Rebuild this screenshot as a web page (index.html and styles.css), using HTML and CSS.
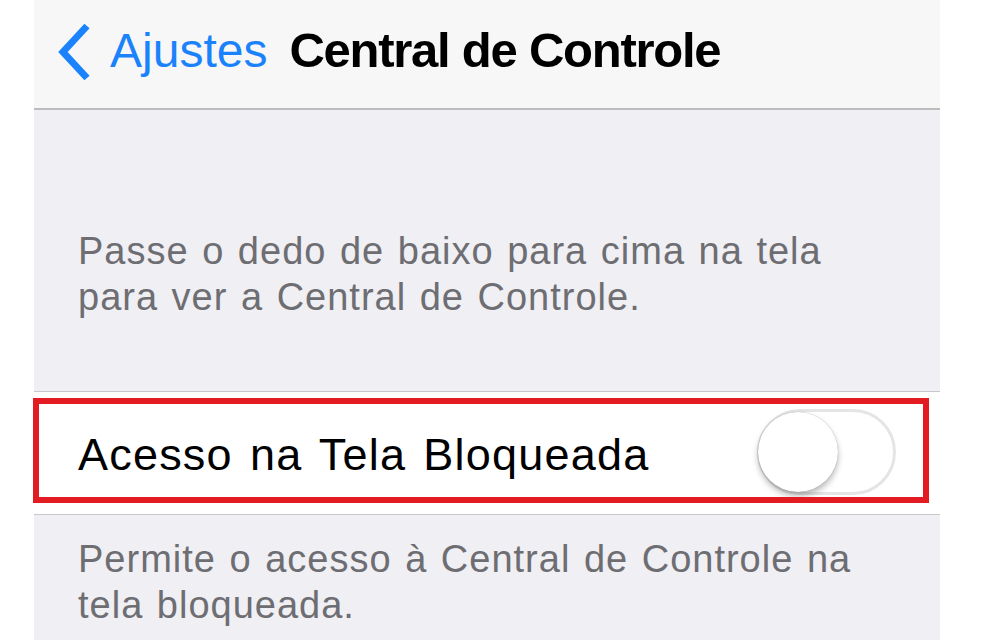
FILE: index.html
```html
<!DOCTYPE html>
<html lang="pt">
<head>
<meta charset="utf-8">
<title>Central de Controle</title>
<link rel="stylesheet" href="styles.css">
</head>
<body>
<div class="screen">
  <header class="nav">
    <a class="back" href="#">
      <svg class="chevron" width="36" height="58" viewBox="0 0 36 58"><path d="M31 3 L7 29 L31 55" fill="none" stroke="#1a82fb" stroke-width="7"/></svg>
      <span class="back-label">Ajustes</span>
    </a>
    <h1 class="title">Central de Controle</h1>
  </header>
  <main class="content">
    <p class="section-header">Passe o dedo de baixo para cima na tela<br>para ver a Central de Controle.</p>
    <div class="group">
      <div class="row">
        <span class="row-label">Acesso na Tela Bloqueada</span>
        <span class="switch"><span class="knob"></span></span>
      </div>
      <div class="highlight"></div>
    </div>
    <p class="section-footer">Permite o acesso à Central de Controle na<br>tela bloqueada.</p>
  </main>
</div>
</body>
</html>
```

FILE: styles.css
```css
html, body {
  margin: 0;
  padding: 0;
  background: #ffffff;
  height: 100%;
  overflow: hidden;
}

body {
  font-family: "Liberation Sans", Arial, sans-serif;
}

.screen {
  margin-left: 34px;
  width: 906px;
  height: 640px;
  background: #efeff4;
  display: flex;
  flex-direction: column;
}

/* navigation bar */
.nav {
  height: 108px;
  background: #f7f7f7;
  border-bottom: 2px solid #bcbcbc;
  display: flex;
  align-items: center;
  flex-shrink: 0;
}

.back {
  display: flex;
  align-items: center;
  text-decoration: none;
  margin-left: 22px;
  gap: 18px;
}

.chevron {
  display: block;
  margin-top: -4px;
}

.back-label {
  color: #1a82fb;
  font-size: 48px;
  line-height: 1;
  margin-top: -6px;
}

.title {
  margin: -8px 0 0 22px;
  font-size: 49px;
  font-weight: bold;
  letter-spacing: -1.25px;
  color: #000;
  line-height: 1;
}

/* grouped list */
.content {
  flex: 1;
}

.section-header,
.section-footer {
  margin: 0;
  color: #6d6d72;
  font-size: 38px;
  line-height: 46px;
  letter-spacing: 1px;
  word-spacing: 2px;
  padding-left: 44px;
}

.section-header {
  padding-top: 118px;
  padding-bottom: 71px;
}

.section-footer {
  padding-top: 21px;
}

.group {
  position: relative;
  background: #ffffff;
  border-top: 1px solid #c8c7cc;
  border-bottom: 1px solid #c8c7cc;
}

.row {
  height: 122px;
  display: flex;
  align-items: center;
  justify-content: space-between;
  padding-left: 44px;
  padding-right: 44px;
}

.row-label {
  font-size: 45px;
  line-height: 45px;
  letter-spacing: 1.2px;
  word-spacing: 3.5px;
  color: #000;
  margin-top: 2px;
}

/* switch, off state */
.switch {
  position: relative;
  width: 139px;
  height: 86px;
  box-sizing: border-box;
  border: 3px solid #e5e5e5;
  border-radius: 43px;
  background: #ffffff;
  margin-top: -2px;
}

.knob {
  position: absolute;
  left: -2px;
  top: 0;
  width: 80px;
  height: 80px;
  border-radius: 50%;
  background: #ffffff;
  box-shadow: 0 4px 6px rgba(0, 0, 0, 0.28), 0 0 1px rgba(0, 0, 0, 0.35);
}

/* red annotation frame over the row */
.highlight {
  position: absolute;
  left: -1px;
  top: 6px;
  width: 896px;
  height: 105px;
  box-sizing: border-box;
  border: 6px solid #e31b23;
  pointer-events: none;
}
```
